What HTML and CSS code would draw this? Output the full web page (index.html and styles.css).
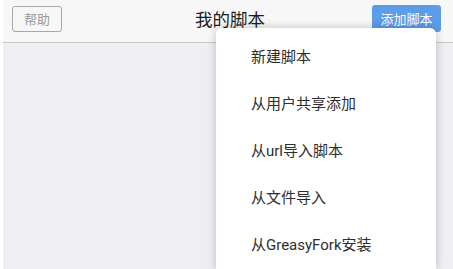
FILE: index.html
```html
<!DOCTYPE html>
<html lang="zh-CN">
<head>
<meta charset="UTF-8">
<title>我的脚本</title>
<link rel="stylesheet" href="styles.css">
</head>
<body>
<div class="page">
<div class="topbar">
<button class="btn-help">帮助</button>
<h1 class="title">我的脚本</h1>
<button class="btn-add">添加脚本</button>
</div>
<div class="content"></div>

<ul class="menu">
<li>新建脚本</li>
<li>从用户共享添加</li>
<li>从url导入脚本</li>
<li>从文件导入</li>
<li>从GreasyFork安装</li>
</ul>
</div>
</body>
</html>
```

FILE: styles.css
```css
*{
    box-sizing:border-box;
    padding:0;
    margin:0;
}
body{
    font-family:Roboto, "Noto Sans CJK SC", sans-serif;
    background:#fff;
    width:453px;
    height:269px;
    overflow:hidden;
}
.page{
    position:relative;
    margin-left:3px;
    height:100%;
    display:flex;
    flex-direction:column;
}
.topbar{
    height:43px;
    flex:none;
    background:#f7f7f7;
    border-bottom:1px solid #c8c8c8;
    display:flex;
    align-items:center;
    justify-content:space-between;
    padding:0 12px 5px 9px;
}
.btn-help{
    width:50px;
    height:26px;
    border:1px solid #a8a8a8;
    border-radius:3px;
    background:#f7f7f7;
    color:#9a9a9a;
    font-family:inherit;
    font-size:13px;
}
.title{
    font-size:17.5px;
    font-weight:normal;
    color:#1c1c1c;
    margin-left:26px;
}
.btn-add{
    width:69px;
    height:27px;
    border:none;
    border-radius:3px;
    background:#5b9de6;
    color:#fff;
    font-family:inherit;
    font-size:13px;
}
.content{
    flex:1;
    background:#eeeef3;
}
.menu{
    position:absolute;
    top:28px;
    bottom:0;
    left:213px;
    width:220px;
    padding-top:6px;
    list-style:none;
    background:#fff;
    border-radius:6px 6px 0 0;
    box-shadow:0 0 10px rgba(0,0,0,0.22);
}
.menu li{
    height:47px;
    line-height:47px;
    padding-left:35px;
    font-size:15px;
    color:#2e2e2e;
}
```
